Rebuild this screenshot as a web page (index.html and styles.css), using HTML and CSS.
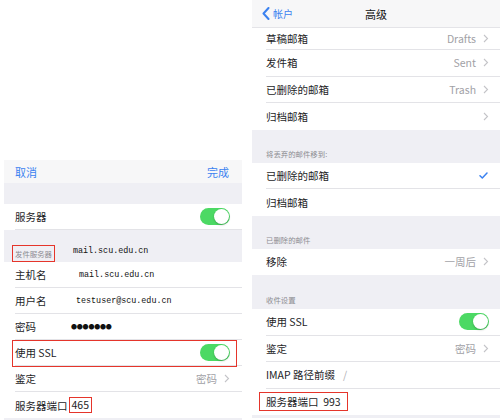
FILE: index.html
```html
<!DOCTYPE html>
<html lang="zh-CN">
<head>
    <meta charset="UTF-8">
    <meta name="viewport" content="width=device-width, initial-scale=1.0">
    <title>邮件服务器设置</title>
    <link rel="stylesheet" href="styles.css">
</head>
<body>
    <!-- 发件服务器 -->
    <div class="panel panel-left">
        <div class="nav nav-left">
            <span class="link">取消</span>
            <span class="link">完成</span>
        </div>
        <div class="band"></div>
        <div class="row">
            <div class="row-in">
                <span class="label">服务器</span>
                <span class="toggle"><span class="knob"></span></span>
            </div>
        </div>
        <div class="section-out">
            <span class="section-title boxed">发件服务器</span>
            <span class="mono mono-head">mail.scu.edu.cn</span>
        </div>
        <div class="row">
            <div class="row-in">
                <span class="label label-fixed">主机名</span>
                <span class="mono mono-host">mail.scu.edu.cn</span>
            </div>
        </div>
        <div class="row">
            <div class="row-in">
                <span class="label label-fixed">用户名</span>
                <span class="mono">testuser@scu.edu.cn</span>
            </div>
        </div>
        <div class="row">
            <div class="row-in">
                <span class="label label-fixed">密码</span>
                <span class="dots">●●●●●●●</span>
            </div>
        </div>
        <div class="row hl-row">
            <div class="row-in">
                <span class="label">使用 SSL</span>
                <span class="toggle"><span class="knob"></span></span>
            </div>
        </div>
        <div class="row">
            <div class="row-in">
                <span class="label">鉴定</span>
                <span class="value">密码</span>
                <svg class="chev" width="6" height="9" viewBox="0 0 6 9"><polyline points="1,1 4.5,4.5 1,8" fill="none" stroke="#c4c4c8" stroke-width="1.1"/></svg>
            </div>
        </div>
        <div class="row">
            <div class="row-in">
                <span class="label">服务器端口</span>
                <span class="port boxed">465</span>
            </div>
        </div>
    </div>

    <!-- 高级 -->
    <div class="panel panel-right">
        <div class="nav nav-right">
            <span class="back">
                <svg width="8" height="13" viewBox="0 0 8 13"><polyline points="6.5,1 1.5,6.5 6.5,12" fill="none" stroke="#3b82f0" stroke-width="2" stroke-linecap="round" stroke-linejoin="round"/></svg>
                <span class="link">帐户</span>
            </span>
            <span class="nav-title">高级</span>
        </div>
        <div class="group">
            <div class="row row-r row-cut">
                <div class="row-in">
                    <span class="label">草稿邮箱</span>
                    <span class="value">Drafts</span>
                    <svg class="chev" width="6" height="9" viewBox="0 0 6 9"><polyline points="1,1 4.5,4.5 1,8" fill="none" stroke="#c4c4c8" stroke-width="1.1"/></svg>
                </div>
            </div>
            <div class="row row-r">
                <div class="row-in">
                    <span class="label">发件箱</span>
                    <span class="value">Sent</span>
                    <svg class="chev" width="6" height="9" viewBox="0 0 6 9"><polyline points="1,1 4.5,4.5 1,8" fill="none" stroke="#c4c4c8" stroke-width="1.1"/></svg>
                </div>
            </div>
            <div class="row row-r">
                <div class="row-in">
                    <span class="label">已删除的邮箱</span>
                    <span class="value">Trash</span>
                    <svg class="chev" width="6" height="9" viewBox="0 0 6 9"><polyline points="1,1 4.5,4.5 1,8" fill="none" stroke="#c4c4c8" stroke-width="1.1"/></svg>
                </div>
            </div>
            <div class="row row-r">
                <div class="row-in">
                    <span class="label">归档邮箱</span>
                    <span class="value"></span>
                    <svg class="chev" width="6" height="9" viewBox="0 0 6 9"><polyline points="1,1 4.5,4.5 1,8" fill="none" stroke="#c4c4c8" stroke-width="1.1"/></svg>
                </div>
            </div>
        </div>

        <div class="section-r"><span class="section-title">将丢弃的邮件移到:</span></div>
        <div class="group">
            <div class="row row-r">
                <div class="row-in">
                    <span class="label">已删除的邮箱</span>
                    <svg class="check" width="9" height="7" viewBox="0 0 9 7"><polyline points="1,3.8 3.3,6 8,1" fill="none" stroke="#3b82f0" stroke-width="1.5" stroke-linecap="round" stroke-linejoin="round"/></svg>
                </div>
            </div>
            <div class="row row-r">
                <div class="row-in">
                    <span class="label">归档邮箱</span>
                </div>
            </div>
        </div>

        <div class="section-r"><span class="section-title">已删除的邮件</span></div>
        <div class="group">
            <div class="row row-r">
                <div class="row-in">
                    <span class="label">移除</span>
                    <span class="value">一周后</span>
                    <svg class="chev" width="6" height="9" viewBox="0 0 6 9"><polyline points="1,1 4.5,4.5 1,8" fill="none" stroke="#c4c4c8" stroke-width="1.1"/></svg>
                </div>
            </div>
        </div>

        <div class="section-r section-tall"><span class="section-title">收件设置</span></div>
        <div class="group">
            <div class="row row-r">
                <div class="row-in">
                    <span class="label">使用 SSL</span>
                    <span class="toggle"><span class="knob"></span></span>
                </div>
            </div>
            <div class="row row-r">
                <div class="row-in">
                    <span class="label">鉴定</span>
                    <span class="value">密码</span>
                    <svg class="chev" width="6" height="9" viewBox="0 0 6 9"><polyline points="1,1 4.5,4.5 1,8" fill="none" stroke="#c4c4c8" stroke-width="1.1"/></svg>
                </div>
            </div>
            <div class="row row-r">
                <div class="row-in">
                    <span class="label">IMAP 路径前缀</span>
                    <span class="slash">/</span>
                </div>
            </div>
            <div class="row row-r">
                <div class="row-in">
                    <span class="label port-r boxed">服务器端口&nbsp; 993</span>
                </div>
            </div>
        </div>
    </div>
</body>
</html>
```

FILE: styles.css
```css
/* Reset básico */
* {
    margin: 0;
    padding: 0;
    box-sizing: border-box;
}

body {
    font-family: "Noto Sans CJK SC", "Noto Sans", sans-serif;
    background: #fff;
    color: #1d1d1f;
    display: flex;
    align-items: flex-start;
    padding-left: 4px;
    width: 503px;
    height: 420px;
    overflow: hidden;
    font-size: 10.5px;
}

/* Painéis */
.panel {
    background: #efeff4;
}

.panel-left {
    width: 238px;
    margin-top: 160px;
    height: 260px;
}

.panel-right {
    width: 248px;
    margin-left: 10px;
    height: 418px;
}

/* Barra de navegação */
.nav {
    background: #f7f7f8;
    display: flex;
    align-items: center;
}

.nav-left {
    height: 23px;
    justify-content: space-between;
    padding: 0 13px 0 11px;
    font-size: 11px;
}

.nav-right {
    height: 28px;
    position: relative;
    padding-left: 10px;
    border-bottom: 1px solid #e4e4e8;
    font-size: 11px;
}

.link {
    color: #3b82f0;
}

.back {
    display: flex;
    align-items: center;
    gap: 3px;
}

.back .link {
    font-size: 10px;
}

.nav-title {
    position: absolute;
    left: 0;
    right: 0;
    text-align: center;
    pointer-events: none;
    color: #111;
}

.band {
    height: 21px;
}

/* Linhas */
.row {
    background: #fff;
    padding-left: 11px;
}

.row-in {
    display: flex;
    align-items: center;
    height: 26px;
    padding-right: 12px;
    border-bottom: 1px solid #e3e3e7;
}

.panel-left .row:last-child .row-in,
.group .row:last-child .row-in {
    border-bottom: none;
}

.row-r {
    padding-left: 14px;
}

.row-r .row-in {
    height: 26.5px;
    padding-right: 11px;
}

.row-cut .row-in {
    height: 22px;
}

.label {
    white-space: nowrap;
}

.label-fixed {
    width: 56px;
}

.value {
    margin-left: auto;
    color: #a1a1a6;
    margin-right: 7px;
}

.chev {
    flex: none;
}

.check {
    margin-left: auto;
    margin-right: 1px;
}

.slash {
    color: #b0b0b4;
    margin-left: 8px;
}

/* Interruptor */
.toggle {
    margin-left: auto;
    width: 30px;
    height: 17px;
    border-radius: 9px;
    background: #4cd964;
    display: flex;
    align-items: center;
    justify-content: flex-end;
    padding-right: 1px;
}

.knob {
    width: 15px;
    height: 15px;
    border-radius: 50%;
    background: #fff;
    box-shadow: 0 1px 2px rgba(0, 0, 0, 0.25);
}

/* Texto de máquina */
.mono {
    font-family: "Liberation Mono", "DejaVu Sans Mono", monospace;
    font-size: 8.4px;
    color: #111;
    margin-left: 5px;
}

.mono-host {
    margin-left: 8px;
}

.mono-head {
    margin-left: 18px;
    margin-bottom: 6px;
}

.dots {
    font-size: 6px;
    letter-spacing: -0.2px;
    color: #111;
}

/* Cabeçalhos de seção */
.section-out {
    height: 32px;
    display: flex;
    align-items: flex-end;
    padding-left: 8px;
}

.section-title {
    font-size: 7.4px;
    color: #8c8c91;
}

.section-r {
    height: 33px;
    display: flex;
    align-items: flex-end;
    padding: 0 0 4px 14px;
}

.section-tall {
    height: 34px;
}

/* Destaques em vermelho */
.boxed {
    border: 1.5px solid #e5352b;
}

.section-out .boxed {
    height: 17px;
    display: flex;
    align-items: center;
    padding: 0 2px;
}

.port {
    margin-left: 1px;
    padding: 0 2px;
    line-height: 14px;
}

.port-r {
    margin-left: -7px;
    padding: 0 6px;
    line-height: 17px;
}

.hl-row {
    position: relative;
}

.hl-row::after {
    content: '';
    position: absolute;
    left: 8px;
    right: 5px;
    top: 0;
    bottom: -1px;
    border: 1.5px solid #e5352b;
    pointer-events: none;
}
```
